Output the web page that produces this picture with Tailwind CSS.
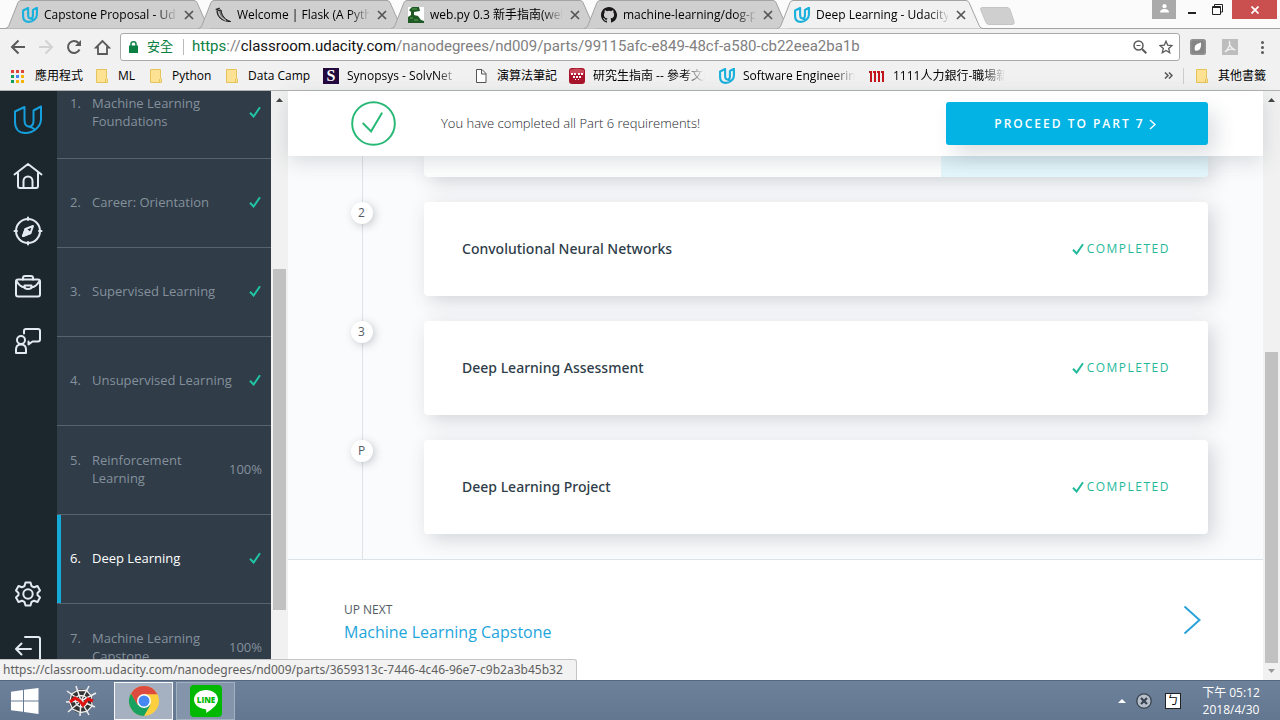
<!DOCTYPE html>
<html lang="zh-Hant">
<head>
<meta charset="utf-8">
<meta name="viewport" content="width=device-width, initial-scale=1">
<title>Deep Learning - Udacity</title>
<script src="https://cdn.jsdelivr.net/npm/@tailwindcss/browser@4"></script>
</head>
<body class="flex h-screen flex-col overflow-hidden bg-[#f1f1f1] font-['Open_Sans','Noto_Sans_CJK_TC',sans-serif] text-xs text-black">

<svg class="hidden" aria-hidden="true">
  <symbol id="udacity" viewBox="0 0 30 30"><path d="M11.5 2 L2 6.500 V17 C2 24 6 28 12.500 28 C20 28 28 22 28 14 V1.500 L20.500 5.500 V16 C20.500 19 19 22 15.500 21.500 C12 21 11.500 18 11.500 15 Z M15.500 21.500 C18.500 22 20.500 23.500 22 24.500" fill="none" stroke="currentColor" stroke-linejoin="round"/></symbol>
  <symbol id="tab-shape" viewBox="0 0 206 29"><path d="M0 28.500 C3 28 3.500 26.500 4.500 24 L13 2.500 Q14 .500 16 .500 H189 Q191 .500 192 2.500 L201.500 24 C202.500 26.500 203 28 206 28.500" stroke="#a3a3a3"/></symbol>
  <symbol id="close" viewBox="0 0 10 10"><path d="M1 1 L9 9 M9 1 L1 9" fill="none" stroke="#555" stroke-width="1.7"/></symbol>
  <symbol id="folder" viewBox="0 0 16 16"><path d="M2.500 1.500 H12.500 V10.500 L13.500 11 V14.500 H2.500 Z" fill="#fde293" stroke="#e5c45c"/><path d="M11.500 11 V14" stroke="#e5c45c"/></symbol>
  <symbol id="check" viewBox="0 0 12 12"><path d="M1 6.800 L4.600 10.500 L11 1.200" fill="none" stroke="currentColor" stroke-width="2"/></symbol>
</svg>

<header class="shrink-0">
  <div class="flex h-[29px] items-start border-b border-[#a3a3a3] bg-[#fbfbfb]">
    <nav aria-label="Tabs" class="flex h-[29px] min-w-0 pl-[5px]">
      <div class="relative -mr-[13px] flex h-[29px] w-[206px] items-center pl-[17px]">
        <svg class="absolute inset-0 h-[29px] w-[206px] fill-[#cfcfcf]"><use href="#tab-shape"/></svg>
        <svg class="relative size-4 shrink-0 stroke-[4] text-[#1cb0dc]"><use href="#udacity"/></svg>
        <a href="#" class="relative ml-1.5 w-[132px] overflow-hidden whitespace-nowrap [mask-image:linear-gradient(to_right,#000_112px,transparent_134px)]">Capstone Proposal - Udacity</a>
        <button aria-label="Close tab" class="relative ml-2"><svg class="size-2.5"><use href="#close"/></svg></button>
      </div>
      <div class="relative -mr-[13px] flex h-[29px] w-[206px] items-center pl-[17px]">
        <svg class="absolute inset-0 h-[29px] w-[206px] fill-[#cfcfcf]"><use href="#tab-shape"/></svg>
        <svg class="relative size-4 shrink-0" viewBox="0 0 16 16"><path d="M.500 2 L4.500 .500 L5 2 L1 3.500 Z" fill="#222"/><path d="M2 4 C2 9 6 14.500 15.500 14.500 C10.500 13 6.500 9 6 3 Z" fill="#777" stroke="#111"/><path d="M3.500 4 C4 8 6.500 11.500 11 13.500" fill="none" stroke="#eee" stroke-width=".800"/></svg>
        <a href="#" class="relative ml-1.5 w-[132px] overflow-hidden whitespace-nowrap [mask-image:linear-gradient(to_right,#000_112px,transparent_134px)]">Welcome | Flask (A Python Microframework)</a>
        <button aria-label="Close tab" class="relative ml-2"><svg class="size-2.5"><use href="#close"/></svg></button>
      </div>
      <div class="relative -mr-[13px] flex h-[29px] w-[206px] items-center pl-[17px]">
        <svg class="absolute inset-0 h-[29px] w-[206px] fill-[#cfcfcf]"><use href="#tab-shape"/></svg>
        <svg class="relative size-4 shrink-0" viewBox="0 0 16 16"><path fill="#fff" d="M0 0H16V16H0Z"/><path d="M1 3 L4 0 H11 L12 4 L6 5 V8 L10 9 L13 13 L16 14 V16 H0 V10 L3 8 V5 Z" fill="#1f5a26"/><path d="M4 2 H9 M2 11 H5 M6 13 H10" stroke="#58a04e"/></svg>
        <a href="#" class="relative ml-1.5 w-[132px] overflow-hidden whitespace-nowrap [mask-image:linear-gradient(to_right,#000_112px,transparent_134px)]">web.py 0.3 新手指南(web.py)</a>
        <button aria-label="Close tab" class="relative ml-2"><svg class="size-2.5"><use href="#close"/></svg></button>
      </div>
      <div class="relative -mr-[13px] flex h-[29px] w-[206px] items-center pl-[17px]">
        <svg class="absolute inset-0 h-[29px] w-[206px] fill-[#cfcfcf]"><use href="#tab-shape"/></svg>
        <svg class="relative size-4 shrink-0" viewBox="0 0 16 16"><path fill="#191717" d="M8 0C3.580 0 0 3.580 0 8c0 3.540 2.290 6.530 5.470 7.590.4.070.550-.170.550-.380 0-.190-.010-.820-.010-1.490-2.010.370-2.530-.490-2.690-.940-.090-.230-.480-.940-.820-1.130-.280-.150-.680-.520-.010-.530.630-.010 1.080.580 1.230.820.720 1.210 1.870.870 2.330.660.070-.520.280-.870.510-1.070-1.780-.200-3.640-.890-3.640-3.950 0-.870.310-1.590.820-2.150-.080-.200-.360-1.020.080-2.120 0 0 .670-.210 2.200.820a7.600 7.600 0 0 1 4 0c1.530-1.040 2.200-.820 2.200-.820.440 1.100.160 1.920.080 2.120.510.560.820 1.270.820 2.150 0 3.070-1.870 3.750-3.650 3.950.290.250.540.730.540 1.480 0 1.070-.010 1.930-.010 2.200 0 .210.150.460.550.380A8 8 0 0 0 8 0z"/></svg>
        <a href="#" class="relative ml-1.5 w-[132px] overflow-hidden whitespace-nowrap [mask-image:linear-gradient(to_right,#000_112px,transparent_134px)]">machine-learning/dog-project</a>
        <button aria-label="Close tab" class="relative ml-2"><svg class="size-2.5"><use href="#close"/></svg></button>
      </div>
      <div aria-current="page" class="relative flex h-[29px] w-[206px] items-center pl-[17px]">
        <svg class="absolute inset-0 h-[29px] w-[206px] fill-[#f1f1f1]"><use href="#tab-shape"/></svg>
        <svg class="relative size-4 shrink-0 stroke-[4] text-[#1cb0dc]"><use href="#udacity"/></svg>
        <a href="#" class="relative ml-1.5 w-[132px] overflow-hidden whitespace-nowrap [mask-image:linear-gradient(to_right,#000_112px,transparent_134px)]">Deep Learning - Udacity</a>
        <button aria-label="Close tab" class="relative ml-2"><svg class="size-2.5"><use href="#close"/></svg></button>
      </div>
    </nav>
    <button aria-label="New tab" class="mt-[7px] -ml-[3px]"><svg class="h-[18px] w-[35px]" viewBox="0 0 35 18"><path d="M2 .500 H27 Q29 .500 30 2.500 L34 14.500 Q35 17.500 32 17.500 H9 Q7 17.500 6 15.500 L.800 3 Q0 .500 2 .500Z" fill="#cfcfcf" stroke="#c4c4c4"/></svg></button>
    <div class="mr-[3px] ml-auto flex h-[19px] items-stretch">
      <button aria-label="Profile" class="flex w-6 items-start justify-center bg-[#aaa] pt-1"><svg class="size-[9px]" viewBox="0 0 9 9"><circle cx="4.500" cy="2.200" r="2.100" fill="#fff"/><path d="M0 8.500 Q0 5 4.500 5 Q9 5 9 8.500Z" fill="#fff"/></svg></button>
      <button aria-label="Minimize" class="flex w-[31px] items-center justify-center pt-1.5"><span class="h-0.5 w-2 bg-[#222]"></span></button>
      <button aria-label="Restore" class="flex w-[25px] items-center justify-start pl-[5px]"><svg class="size-[11px]" viewBox="0 0 11 11" fill="none" stroke="#222"><path d="M2.500 2 V.500 H10.500 V8 H9"/><path d="M.500 2.500 H8.500 V10.500 H.500Z M.500 3.500 H8.500"/></svg></button>
      <button aria-label="Close window" class="flex w-[45px] items-center justify-center bg-[#c9504f]"><svg class="size-2" viewBox="0 0 8 8"><path d="M.500 .500 L7.500 7.500 M7.500 .500 L.500 7.500" stroke="#fff" stroke-width="1.700"/></svg></button>
    </div>
  </div>

  <div class="flex h-9 items-center pl-1 text-[#5a5a5a]">
    <button aria-label="Back" class="flex w-7 justify-center"><svg class="size-4" viewBox="0 0 16 16" fill="none" stroke="currentColor" stroke-width="2"><path d="M15 8 H2 M8.500 1.500 L2 8 L8.500 14.500"/></svg></button>
    <button aria-label="Forward" class="flex w-7 justify-center text-[#d2d2d2]"><svg class="size-4" viewBox="0 0 16 16" fill="none" stroke="currentColor" stroke-width="2"><path d="M1 8 H14 M7.500 1.500 L14 8 L7.500 14.500"/></svg></button>
    <button aria-label="Reload" class="flex w-7 justify-center"><svg class="size-4" viewBox="0 0 16 16"><path d="M13.500 10.500 A6 6 0 1 1 12.500 4" fill="none" stroke="currentColor" stroke-width="2"/><path d="M15 1 V7 H9 Z" fill="currentColor"/></svg></button>
    <button aria-label="Home" class="flex w-7 justify-center"><svg class="size-[17px]" viewBox="0 0 17 17"><path d="M8.500 2 L2 8.500 H4 V15 H13 V8.500 H15 Z" fill="none" stroke="currentColor" stroke-width="1.800"/></svg></button>
    <div class="ml-1 flex h-7 min-w-0 flex-1 items-center rounded-[3px] border border-[#aaa] bg-white pl-2">
      <svg class="mr-[9px] h-3 w-[9px] shrink-0" viewBox="0 0 9 12"><path d="M0 4.500 H9 V12 H0Z" fill="#0b8043"/><path d="M2 5 V3 A2.500 2.200 0 0 1 7 3 V5" fill="none" stroke="#0b8043" stroke-width="1.500"/></svg>
      <span class="shrink-0 text-[13px] text-[#0b8043]">安全</span>
      <span class="mr-2 ml-[10px] h-4 w-px shrink-0 bg-[#bbb]"></span>
      <div role="textbox" aria-label="Address" tabindex="0" class="min-w-0 flex-1 overflow-hidden font-['Roboto','Open_Sans',sans-serif] text-[15px] whitespace-nowrap text-[#808080]"><span class="text-[#0b8043]">https</span>://<span class="text-[#111]">classroom.udacity.com</span>/nanodegrees/nd009/parts/99115afc-e849-48cf-a580-cb22eea2ba1b</div>
      <button aria-label="Zoom" class="flex w-[26px] justify-center"><svg class="size-[14px]" viewBox="0 0 14 14" fill="none" stroke="currentColor"><circle cx="5.500" cy="5.500" r="4.500" stroke-width="1.500"/><path d="M3.500 5.500 H7.500" /><path d="M9 9 L13.300 13.300" stroke-width="2"/></svg></button>
      <button aria-label="Bookmark" class="flex w-[26px] justify-center"><svg class="size-[14px]" viewBox="0 0 14 14"><path d="M7 1.200 L8.700 5.200 L13 5.600 L9.700 8.400 L10.700 12.700 L7 10.400 L3.300 12.700 L4.300 8.400 L1 5.600 L5.300 5.200 Z" fill="none" stroke="currentColor" stroke-width="1.300"/></svg></button>
    </div>
    <button aria-label="Extension" class="ml-0.5 flex w-8 justify-center"><svg class="size-4" viewBox="0 0 16 16"><rect width="16" height="16" rx="2.500" fill="#929292"/><rect x="1.500" y="1.500" width="13" height="13" rx="2" fill="#858585"/><path d="M5 11.500 Q3.500 7 7 5 L11 3.500 Q11.500 9 9 11 Q7 12 5 11.500Z" fill="#fff"/></svg></button>
    <button aria-label="PDF" class="flex w-8 justify-center"><svg class="size-4" viewBox="0 0 16 16"><rect width="16" height="16" fill="#bdbdbd"/><path d="M3 13 C6 10 8.500 6 7.500 3 C6.500 6 10 10 13.500 11 C10 9.500 6 10 3 13Z" fill="none" stroke="#f1f1f1" stroke-width="1.300"/></svg></button>
    <button aria-label="Menu" class="mr-0.5 flex w-8 justify-center"><svg class="h-[13px] w-[3px]" viewBox="0 0 3 13" fill="currentColor"><circle cx="1.500" cy="1.500" r="1.500"/><circle cx="1.500" cy="6.500" r="1.500"/><circle cx="1.500" cy="11.500" r="1.500"/></svg></button>
  </div>

  <nav aria-label="Bookmarks" class="flex h-[26px] items-center border-b border-[#b2b2b2] pb-1 pl-[9px] whitespace-nowrap">
    <a href="#" class="flex w-[85px] shrink-0 items-center gap-2.5"><svg class="size-4" viewBox="0 0 16 16"><path fill="#db4437" d="M2 2h3v3H2zM7 2h3v3H7zM12 2h3v3h-3z"/><path fill="#0f9d58" d="M2 7h3v3H2z"/><path fill="#4285f4" d="M7 7h3v3H7z"/><path fill="#f4b400" d="M12 7h3v3h-3zM7 12h3v3H7zM12 12h3v3h-3z"/><path fill="#0f9d58" d="M2 12h3v3H2z"/></svg>應用程式</a>
    <a href="#" class="flex w-[54px] shrink-0 items-center gap-2"><svg class="size-4"><use href="#folder"/></svg>ML</a>
    <a href="#" class="flex w-[76px] shrink-0 items-center gap-2"><svg class="size-4"><use href="#folder"/></svg>Python</a>
    <a href="#" class="flex w-[99px] shrink-0 items-center gap-2"><svg class="size-4"><use href="#folder"/></svg>Data Camp</a>
    <a href="#" class="flex w-[150px] shrink-0 items-center gap-2"><span aria-hidden="true" class="flex size-4 items-center justify-center bg-[#24093f] font-['Liberation_Serif',serif] text-base font-bold text-white">S</span><span class="w-[112px] overflow-hidden [mask-image:linear-gradient(to_right,#000_90px,transparent_112px)]">Synopsys - SolvNet</span></a>
    <a href="#" class="flex w-24 shrink-0 items-center gap-2"><svg class="size-4" viewBox="0 0 16 16"><path d="M3.500 1.500 H9 L13 5.500 V14.500 H3.500Z M8.500 1.500 V6 H13" fill="#fff" stroke="#555"/></svg>演算法筆記</a>
    <a href="#" class="flex w-[150px] shrink-0 items-center gap-2"><svg class="size-4" viewBox="0 0 16 16"><rect width="16" height="16" rx="3" fill="#a9152b"/><path d="M1 2 Q8 -1 15 2 V6 H1Z" fill="#c8495a"/><path fill="#fff" d="M2 5h2v2H2zM5 5h2v2H5zM9 5h2v2H9zM12 5h2v2h-2zM4 8h2v2H4zM7 8h2v2H7zM10 8h2v2h-2zM6 11h1v1H6zM9 11h1v1H9z"/></svg><span class="w-[112px] overflow-hidden [mask-image:linear-gradient(to_right,#000_90px,transparent_112px)]">研究生指南 -- 參考文獻</span></a>
    <a href="#" class="flex w-[150px] shrink-0 items-center gap-2"><svg class="size-4 stroke-[4] text-[#1cb0dc]"><use href="#udacity"/></svg><span class="w-[112px] overflow-hidden [mask-image:linear-gradient(to_right,#000_90px,transparent_112px)]">Software Engineering</span></a>
    <a href="#" class="flex w-[150px] shrink-0 items-center gap-2"><svg class="size-4" viewBox="0 0 16 16"><path fill="#c3161c" d="M0 3H3V14H1V5H0ZM4 3H7V14H5V5H4ZM8 3H11V14H9V5H8ZM12 3H15V14H13V5H12Z"/></svg><span class="w-[112px] overflow-hidden [mask-image:linear-gradient(to_right,#000_90px,transparent_112px)]">1111人力銀行-職場新聞</span></a>
    <button aria-label="More bookmarks" class="mr-2.5 ml-auto"><svg class="h-[7px] w-[9px]" viewBox="0 0 9 7"><path d="M1 .500 L4 3.500 L1 6.500 M5 .500 L8 3.500 L5 6.500" fill="none" stroke="#555" stroke-width="1.500"/></svg></button>
    <a href="#" class="mr-3.5 flex items-center gap-2 border-l border-[#ccc] pl-2.5"><svg class="size-4"><use href="#folder"/></svg>其他書籤</a>
  </nav>
</header>

<div class="relative flex min-h-0 flex-1">
  <nav aria-label="Classroom" class="flex w-[57px] shrink-0 flex-col bg-[#1c262d] pr-px pb-1 text-[#e3eaf0]">
    <a href="#" aria-label="Udacity" class="flex h-[57px] items-center justify-center text-[#159fdc]"><svg class="size-[30px] stroke-2"><use href="#udacity"/></svg></a>
    <a href="#" aria-label="Home" class="flex h-[55px] items-center justify-center"><svg class="size-[30px]" viewBox="0 0 30 30" fill="none" stroke="currentColor" stroke-width="2" stroke-linecap="round" stroke-linejoin="round"><path d="M1.500 13.500 L15 3 L28.500 13.500 M5 12 V25 Q5 27 7 27 H23 Q25 27 25 25 V12 M10.500 27 V20 A4.500 4.500 0 0 1 19.500 20 V27"/></svg></a>
    <a href="#" aria-label="Explore" class="flex h-[55px] items-center justify-center"><svg class="size-[30px]" viewBox="0 0 30 30" fill="none" stroke="currentColor" stroke-width="2" stroke-linecap="round" stroke-linejoin="round"><circle cx="15" cy="15" r="12"/><path d="M15 1.500 V4 M15 26 V28.500 M1.500 15 H4 M26 15 H28.500"/><path d="M20 10 L17.500 17 L10 20 L12.500 13 Z"/><path d="M12.500 13 L17.500 17 L10 20Z" fill="currentColor"/></svg></a>
    <a href="#" aria-label="Career" class="flex h-[55px] items-center justify-center"><svg class="size-[30px]" viewBox="0 0 30 30" fill="none" stroke="currentColor" stroke-width="2" stroke-linecap="round" stroke-linejoin="round"><rect x="3" y="8.500" width="24" height="17" rx="2"/><path d="M10 8.500 V7 Q10 5 12 5 H18 Q20 5 20 7 V8.500 M3.500 10 C6 14.500 8.500 16 11.500 16.500 M18.500 16.500 C21.500 16 24 14.500 26.500 10"/><path d="M11.500 14.500 H18.500 V16 Q18.500 18 15 18 Q11.500 18 11.500 16Z"/></svg></a>
    <a href="#" aria-label="Mentorship" class="flex h-[55px] items-center justify-center"><svg class="size-[30px]" viewBox="0 0 30 30" fill="none" stroke="currentColor" stroke-width="2" stroke-linecap="round" stroke-linejoin="round"><circle cx="8" cy="14" r="4"/><path d="M3 27 V23.500 Q3 18.500 8 18.500 Q13 18.500 13 23.500 V27 Z M11 7.500 V5 Q11 3 13 3 H25 Q27 3 27 5 V13.500 Q27 15.500 25 15.500 H19.500 L15.500 18.500 V15.500"/></svg></a>
    <a href="#" aria-label="Settings" class="mt-auto flex h-[55px] items-center justify-center"><svg class="size-[30px]" viewBox="0 0 30 30" fill="none" stroke="currentColor" stroke-width="2" stroke-linejoin="round"><path d="M12.500 3.500 H17.500 L18.500 7 L21 8.300 L24.500 7 L27 11.500 L24.500 14 V16 L27 18.500 L24.500 23 L21 21.700 L18.500 23 L17.500 26.500 H12.500 L11.500 23 L9 21.700 L5.500 23 L3 18.500 L5.500 16 V14 L3 11.500 L5.500 7 L9 8.300 L11.500 7 Z"/><circle cx="15" cy="15" r="4.700"/></svg></a>
    <a href="#" aria-label="Log out" class="flex h-[55px] items-center justify-center"><svg class="size-[30px]" viewBox="0 0 30 30" fill="none" stroke="currentColor" stroke-width="2" stroke-linecap="round" stroke-linejoin="round"><path d="M12 3 H25 Q27 3 27 5 V25 Q27 27 25 27 H12 M18 15 H3.500 M8.500 9.500 L3 15 L8.500 20.500"/></svg></a>
  </nav>

  <aside aria-label="Parts" class="w-[214px] shrink-0 overflow-hidden bg-[#303c48] text-[13px] leading-[18px] text-[#84919c]">
    <ol class="-mt-[21px]">
      <li class="border-b border-[#56636d]"><a href="#" class="flex h-[88px] items-center pr-[9px] pb-1 pl-[13px]"><span class="w-[22px] shrink-0"><span class="block">1.</span><span class="block">&nbsp;</span></span><span class="w-[150px]">Machine Learning Foundations</span><svg class="mr-px ml-auto size-3 text-[#1fc5a5]"><use href="#check"/></svg></a></li>
      <li class="border-b border-[#56636d]"><a href="#" class="flex h-[88px] items-center pr-[9px] pb-0.5 pl-[13px]"><span class="w-[22px] shrink-0">2.</span><span class="w-[150px]">Career: Orientation</span><svg class="mr-px ml-auto size-3 text-[#1fc5a5]"><use href="#check"/></svg></a></li>
      <li class="border-b border-[#56636d]"><a href="#" class="flex h-[88px] items-center pr-[9px] pb-0.5 pl-[13px]"><span class="w-[22px] shrink-0">3.</span><span class="w-[150px]">Supervised Learning</span><svg class="mr-px ml-auto size-3 text-[#1fc5a5]"><use href="#check"/></svg></a></li>
      <li class="border-b border-[#56636d]"><a href="#" class="flex h-[88px] items-center pr-[9px] pb-0.5 pl-[13px]"><span class="w-[22px] shrink-0">4.</span><span class="w-[150px]">Unsupervised Learning</span><svg class="mr-px ml-auto size-3 text-[#1fc5a5]"><use href="#check"/></svg></a></li>
      <li class="border-b border-[#56636d]"><a href="#" class="flex h-[88px] items-center pr-[9px] pb-0.5 pl-[13px]"><span class="w-[22px] shrink-0"><span class="block">5.</span><span class="block">&nbsp;</span></span><span class="w-[120px]">Reinforcement Learning</span><span class="ml-auto">100%</span></a></li>
      <li class="border-b border-[#56636d]"><a href="#" aria-current="page" class="flex h-[88px] items-center border-l-4 border-[#15aad8] pr-[9px] pb-0.5 pl-[9px] text-white"><span class="w-[22px] shrink-0">6.</span><span class="w-[150px]">Deep Learning</span><svg class="mr-px ml-auto size-3 text-[#1fc5a5]"><use href="#check"/></svg></a></li>
      <li><a href="#" class="flex h-[88px] items-center pr-[9px] pb-0.5 pl-[13px]"><span class="w-[22px] shrink-0"><span class="block">7.</span><span class="block">&nbsp;</span></span><span class="w-[120px]">Machine Learning Capstone</span><span class="ml-auto">100%</span></a></li>
    </ol>
  </aside>
  <div aria-hidden="true" class="flex w-[17px] shrink-0 flex-col items-center bg-[#f1f1f1] pt-[7px]">
    <svg class="h-1 w-[7px]" viewBox="0 0 7 4"><path d="M0 4 L3.500 0 L7 4Z" fill="#444"/></svg>
    <div class="mt-[167px] h-[341px] w-[13px] bg-[#c1c1c1]"></div>
  </div>

  <main class="flex min-w-0 flex-1 flex-col bg-white">
    <div class="relative z-10 flex h-[65px] shrink-0 items-center bg-white pr-[55px] pl-[63px] shadow-[0_6px_20px_rgba(46,61,73,0.16)]">
      <svg class="size-[45px] shrink-0" viewBox="0 0 46 46" fill="none" stroke="#27b876" stroke-width="2"><circle cx="23" cy="23" r="21.800"/><path d="M12.500 23 L20.500 31 L31.500 12.500" stroke-linecap="round"/></svg>
      <p class="ml-[45px] text-[13px] font-light text-[#1c262d]">You have completed all Part 6 requirements!</p>
      <button class="ml-auto flex h-[43px] w-[262px] items-center justify-center gap-1 rounded-[3px] bg-[#02b3e4] pr-1 text-xs font-semibold tracking-[2px] text-white shadow-[8px_10px_20px_rgba(46,61,73,0.16)]">PROCEED TO PART 7 <svg class="mt-0.5 h-[11px] w-[7px]" viewBox="0 0 7 11"><path d="M1 1 L6 5.500 L1 10" fill="none" stroke="#fff" stroke-width="1.500"/></svg></button>
    </div>
    <section aria-label="Lessons" class="relative shrink-0 overflow-hidden border-b border-[#dbe2e8] bg-[#fafbfc] pr-[55px] pb-[25px] pl-[63px]">
      <span class="absolute top-0 bottom-0 left-[74px] w-px bg-[#dbe2e8]"></span>
      <ol class="relative flex flex-col gap-[25px] text-sm text-[#2e3d49]">
        <li class="ml-[73px] flex h-[21px] justify-end rounded-b-[4px] bg-white shadow-[5px_5px_20px_rgba(46,61,73,0.2)]"><span class="w-[267px] rounded-br-[4px] bg-[#e5f8fd]"></span></li>
        <li class="flex items-start"><span class="flex size-[22px] shrink-0 items-center justify-center rounded-full bg-white pr-px text-xs text-[#525c65] shadow-[2px_2px_8px_rgba(46,61,73,0.25)]">2</span>
          <a href="#" class="ml-[51px] flex h-[94px] flex-1 items-center justify-between rounded-[4px] bg-white pr-[38px] pl-[38px] shadow-[5px_5px_20px_rgba(46,61,73,0.2)]"><span class="font-['Noto_Sans',sans-serif] font-medium">Convolutional Neural Networks</span><span class="flex items-center gap-[3px] text-xs tracking-[1.5px] text-[#1fb99a]"><svg class="size-3"><use href="#check"/></svg>COMPLETED</span></a></li>
        <li class="flex items-start"><span class="flex size-[22px] shrink-0 items-center justify-center rounded-full bg-white pr-px text-xs text-[#525c65] shadow-[2px_2px_8px_rgba(46,61,73,0.25)]">3</span>
          <a href="#" class="ml-[51px] flex h-[94px] flex-1 items-center justify-between rounded-[4px] bg-white pr-[38px] pl-[38px] shadow-[5px_5px_20px_rgba(46,61,73,0.2)]"><span class="font-['Noto_Sans',sans-serif] font-medium">Deep Learning Assessment</span><span class="flex items-center gap-[3px] text-xs tracking-[1.5px] text-[#1fb99a]"><svg class="size-3"><use href="#check"/></svg>COMPLETED</span></a></li>
        <li class="flex items-start"><span class="flex size-[22px] shrink-0 items-center justify-center rounded-full bg-white pr-px text-xs text-[#525c65] shadow-[2px_2px_8px_rgba(46,61,73,0.25)]">P</span>
          <a href="#" class="ml-[51px] flex h-[94px] flex-1 items-center justify-between rounded-[4px] bg-white pr-[38px] pl-[38px] shadow-[5px_5px_20px_rgba(46,61,73,0.2)]"><span class="font-['Noto_Sans',sans-serif] font-medium">Deep Learning Project</span><span class="flex items-center gap-[3px] text-xs tracking-[1.5px] text-[#1fb99a]"><svg class="size-3"><use href="#check"/></svg>COMPLETED</span></a></li>
      </ol>
    </section>
    <a href="#" class="flex flex-1 items-center justify-between pr-[62px] pl-14">
      <span class="flex flex-col pt-1"><span class="text-xs leading-5 text-[#525c65]">UP NEXT</span><span class="text-base leading-6 text-[#1ea5dc]">Machine Learning Capstone</span></span>
      <svg class="h-[30px] w-[18px]" viewBox="0 0 18 30"><path d="M1.500 1.500 L16.500 15 L1.500 28.500" fill="none" stroke="#2aa3d8" stroke-width="2"/></svg>
    </a>
  </main>
  <div aria-hidden="true" class="flex w-[17px] shrink-0 flex-col items-center bg-[#f1f1f1] py-[7px]">
    <svg class="h-1 w-[7px]" viewBox="0 0 7 4"><path d="M0 4 L3.500 0 L7 4Z" fill="#444"/></svg>
    <div class="mt-auto mb-[6px] h-[311px] w-[13px] bg-[#c1c1c1]"></div>
    <svg class="h-1 w-[7px]" viewBox="0 0 7 4"><path d="M0 0 L3.500 4 L7 0Z" fill="#999"/></svg>
  </div>

  <div role="status" class="absolute bottom-0 left-0 z-20 flex h-[21px] min-w-[577px] items-center rounded-tr-[3px] border-t border-r border-[#c4c4c4] bg-[#f2f2f2] pr-[3px] pl-[3px] font-['Noto_Sans',sans-serif] text-xs whitespace-nowrap text-[#606060]">https://classroom.udacity.com/nanodegrees/nd009/parts/3659313c-7446-4c46-96e7-c9b2a3b45b32</div>
</div>

<footer class="flex h-10 shrink-0 items-center border-t border-[#56677d] bg-linear-to-b from-[#6d819b] to-[#647790]">
  <button aria-label="Start" class="ml-[11px] flex"><svg class="h-[26px] w-7" viewBox="0 0 28 26" fill="#fff"><path d="M0 3.700 L12 2 V12.400 H0Z M13 1.800 L27.500 0 V12.400 H13Z M0 13.400 H12 V23.800 L0 22.200Z M13 13.400 H27.500 V26 L13 24Z"/></svg></button>
  <button aria-label="Spider" class="ml-[26px] flex"><svg class="size-8" viewBox="0 0 32 32" fill="none"><circle cx="16" cy="16" r="12" fill="#333"/><path d="M16 16 L11 1 M16 16 L24 1 M16 16 L31 8 M16 16 L30 22 M16 16 L24 30 M16 16 L15 31 M16 16 L3 27 M16 16 L1 17 M16 16 L2 6" stroke="#eee" stroke-width="1.500"/><path d="M12.500 5.500 L21.500 5.500 L26.500 11 L27 21 L22 26.500 L15.500 27.500 L7.500 24 L4.500 17 L6.500 9Z M14 10.500 L19 11 L22 13 L22 19 L19.500 21.500 L15.500 22 L12 20 L10 16.500 L11 12.500Z" stroke="#eee" stroke-width="1.300"/><path d="M5 17 L10 13 L15 16 L18 20 L23 14 L28 16" stroke="#e01212" stroke-width="3"/></svg></button>
  <button aria-label="Chrome" class="ml-[17px] flex h-[38px] w-[59px] items-center justify-center border border-white/90 bg-[#a5b1c1]"><svg class="size-[30px]" viewBox="0 0 30 30"><circle cx="15" cy="15" r="15" fill="#fccf3f"/><path d="M2 7.500 A15 15 0 0 0 15 30 L21.500 18.700 L9 19Z" fill="#19a15f"/><path d="M2 7.500 A15 15 0 0 1 28 7.500 L28.300 8.200 H15 L8.500 18.700Z" fill="#dd4b3e"/><circle cx="15" cy="15" r="7" fill="#fff"/><circle cx="15" cy="15" r="5.500" fill="#4688f1"/></svg></button>
  <button aria-label="LINE" class="ml-[3px] flex h-[38px] w-[59px] items-center justify-center border border-[#a3b0c0] bg-[#8495ab]"><svg class="size-8" viewBox="0 0 32 32"><rect width="32" height="32" rx="4" fill="#00b900"/><path d="M16 5 C22.500 5 28 9 28 14.500 C28 20 21 25 16 28 C16.500 26 16.500 24.500 15 24 C8.500 23.500 4 19.500 4 14.500 C4 9 9.500 5 16 5Z" fill="#fff"/><text x="16" y="17.500" text-anchor="middle" font-family="Open Sans, sans-serif" font-size="8" font-weight="800" fill="#00b900">LINE</text></svg></button>
  <div class="ml-auto flex items-center text-white">
    <button aria-label="Show hidden icons" class="flex"><svg class="h-1 w-2" viewBox="0 0 8 4"><path d="M0 4 L4 0 L8 4Z" fill="#fff"/></svg></button>
    <svg class="ml-2.5 size-4" viewBox="0 0 16 16"><circle cx="8" cy="8" r="7.200" fill="#b6bfca" stroke="#39434f" stroke-width="1.300"/><path d="M5 5 L11 11 M11 5 L5 11" stroke="#39434f" stroke-width="2.200"/></svg>
    <button aria-label="Input method" class="ml-[13px] flex size-4 items-center justify-center border border-[#222] bg-white text-xs leading-none text-black">ㄅ</button>
    <time class="mr-[19px] ml-5 flex w-[60px] flex-col items-center text-xs leading-[17px] whitespace-nowrap"><span>下午 05:12</span><span>2018/4/30</span></time>
  </div>
</footer>
</body>
</html>
